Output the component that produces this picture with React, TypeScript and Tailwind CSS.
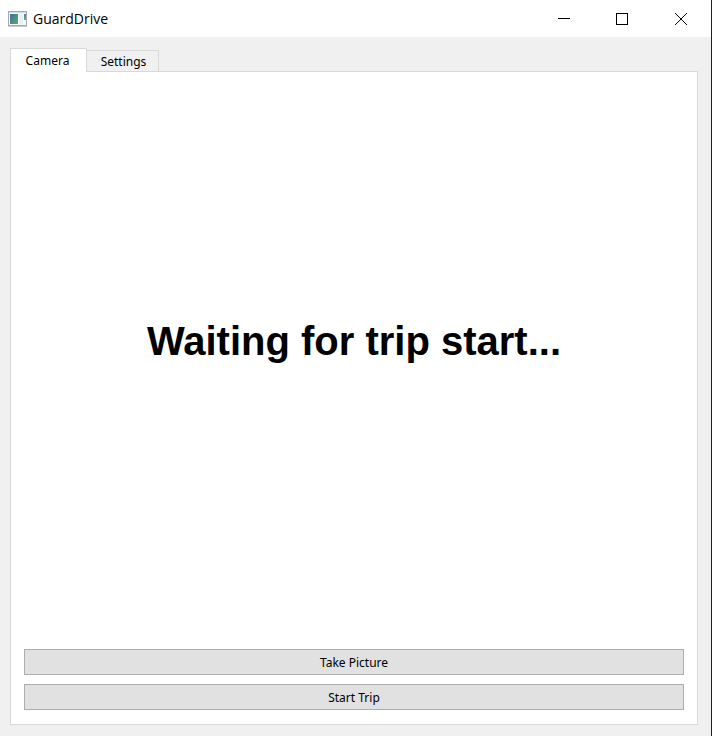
import { useState } from 'react';

function AppIcon() {
  return (
    <svg width="20" height="16" viewBox="0 0 20 16" className="shrink-0" aria-hidden="true">
      <defs>
        <linearGradient id="screen" x1="0" y1="0" x2="1" y2="1">
          <stop offset="0" stopColor="#3f6f98" />
          <stop offset="1" stopColor="#58ab72" />
        </linearGradient>
        <linearGradient id="meter" x1="0" y1="0" x2="0" y2="1">
          <stop offset="0" stopColor="#4b7fb5" />
          <stop offset="1" stopColor="#63b277" />
        </linearGradient>
      </defs>
      <rect x="0.5" y="0.5" width="18" height="14" fill="#f6f8f9" stroke="#a3a9ae" />
      <path d="M0 15.5H19" stroke="#c9cccf" />
      <path d="M1 1.5H18" stroke="#d5dade" />
      <rect x="2" y="3" width="8" height="10" fill="url(#screen)" />
      <rect x="11" y="3" width="4" height="10" fill="#eceff1" />
      <rect x="16" y="3" width="2" height="6" fill="url(#meter)" />
    </svg>
  );
}

const captionButton = 'flex h-full w-[58px] items-center justify-center hover:bg-[#e5e5e5]';

function TitleBar() {
  return (
    <header className="flex h-[37px] items-center bg-white pl-2">
      <AppIcon />
      <h1 className="ml-[5px] grow font-['Open_Sans',sans-serif] text-[14px] leading-5">GuardDrive</h1>
      <button type="button" aria-label="Minimize" className={captionButton}>
        <svg width="12" height="12" viewBox="0 0 12 12" stroke="#000" fill="none" shapeRendering="crispEdges">
          <path d="M0 5.5H12" />
        </svg>
      </button>
      <button type="button" aria-label="Maximize" className={captionButton}>
        <svg width="12" height="12" viewBox="0 0 12 12" stroke="#000" fill="none" shapeRendering="crispEdges">
          <rect x="0.5" y="0.5" width="11" height="11" />
        </svg>
      </button>
      <button type="button" aria-label="Close" className="flex h-full w-[60px] items-center justify-center hover:bg-[#e81123]">
        <svg width="12" height="12" viewBox="0 0 12 12" stroke="#000" fill="none">
          <path d="M0 0L12 12M12 0L0 12" />
        </svg>
      </button>
    </header>
  );
}

const pushButton = 'h-[26px] w-full border border-[#adadad] bg-[#e1e1e1] pt-[2px] hover:border-[#0078d7] hover:bg-[#e5f1fb]';

export default function App() {
  const [tab, setTab] = useState<'camera' | 'settings'>('camera');
  const selected = 'z-10 -mb-px h-6 bg-white';
  const idle = 'h-[21px] bg-[#f0f0f0] pt-[2px]';

  return (
    <div className="flex min-h-screen flex-col border-r border-[#202020] bg-[#f0f0f0] font-['Noto_Sans',sans-serif] text-[12px] leading-4 text-black">
      <TitleBar />
      <main className="flex grow flex-col pt-[11px] pr-[13px] pb-[11px] pl-[10px]">
        <div role="tablist" className="flex items-end">
          <button
            type="button"
            role="tab"
            aria-selected={tab === 'camera'}
            onClick={() => setTab('camera')}
            className={`relative w-[77px] border border-b-0 border-[#d9d9d9] pr-[2px] ${tab === 'camera' ? selected : idle}`}
          >
            Camera
          </button>
          <button
            type="button"
            role="tab"
            aria-selected={tab === 'settings'}
            onClick={() => setTab('settings')}
            className={`relative w-[72px] border border-b-0 border-l-0 border-[#d9d9d9] pl-[2px] ${tab === 'settings' ? selected : idle}`}
          >
            Settings
          </button>
        </div>
        <section role="tabpanel" className="flex grow flex-col gap-[9px] border border-[#d9d9d9] bg-white px-[13px] pb-[14px]">
          <div className="flex grow items-center justify-center pb-[30px]">
            <p className="font-['Liberation_Sans',Arial,sans-serif] text-[40px] leading-[48px] font-bold">
              {tab === 'camera' ? 'Waiting for trip start...' : ''}
            </p>
          </div>
          <button type="button" className={pushButton}>Take Picture</button>
          <button type="button" className={pushButton}>Start Trip</button>
        </section>
      </main>
    </div>
  );
}
